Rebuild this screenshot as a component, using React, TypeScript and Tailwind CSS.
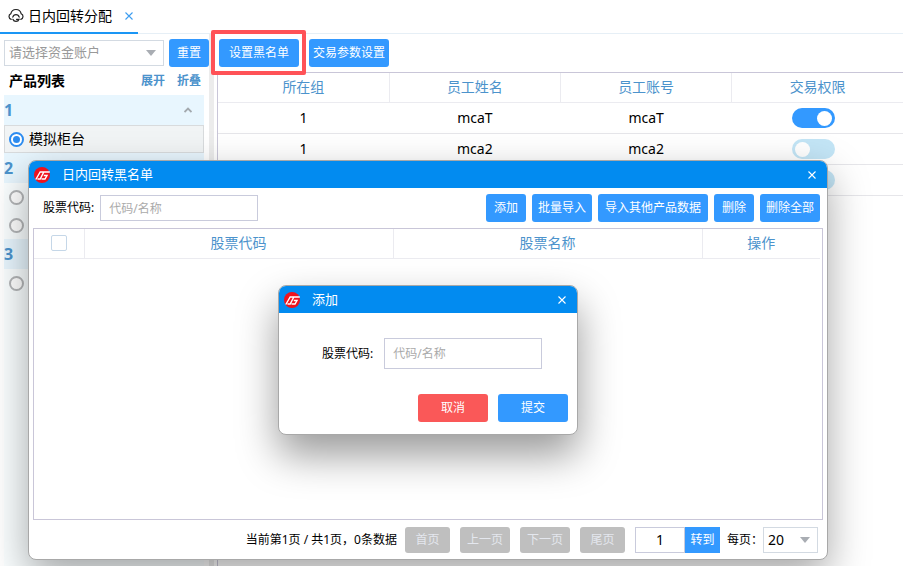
import { useState } from "react";
import type { ReactNode } from "react";

const BUTTON = "h-7 rounded-[3px] bg-[#3399ff] text-xs text-white hover:bg-[#1f8af5]";

function CloudIcon() {
  return (
    <svg className="size-4" viewBox="0 0 16 16" fill="none" stroke="#222" strokeWidth="1.2" strokeLinecap="round">
      <path d="M3.2 11.3A2.900 2.900 0 0 1 2.800 5.800A5.300 5.300 0 0 1 13.200 5.800A2.900 2.900 0 0 1 12.800 11.300" />
      <path d="M4.800 9.200A3.300 3.300 0 0 1 11.200 9.200" />
      <path d="M4.900 11.300A3.300 3.300 0 0 0 11.100 11.300H8.500" />
    </svg>
  );
}

function LogoIcon() {
  return (
    <svg className="size-4" viewBox="0 0 16 16">
      <circle cx="8" cy="8" r="8" fill="#f0121c" />
      <path d="M15.800 5H6.200L1.800 12.500M9.800 5L6.200 12H3.500M9.800 8.500H13L11 12H7.500" fill="none" stroke="#fff" strokeWidth="1.400" />
    </svg>
  );
}

function CloseIcon({ className }: { className?: string }) {
  return (
    <svg className={className} viewBox="0 0 8 8" fill="none" stroke="currentColor" strokeWidth="1.1">
      <path d="M0.500 0.500L7.500 7.500M7.500 0.500L0.500 7.500" />
    </svg>
  );
}

function Caret() {
  return (
    <svg className="pointer-events-none absolute top-1/2 right-2 h-1.5 w-2.5 -translate-y-1/2" viewBox="0 0 10 6">
      <path d="M0 0H10L5 6Z" fill="#a9adb3" />
    </svg>
  );
}

function Switch({ on, label }: { on: boolean; label: string }) {
  return (
    <input
      type="checkbox"
      role="switch"
      aria-label={label}
      defaultChecked={on}
      className="relative block h-5 w-[43px] appearance-none rounded-full bg-[#c3e5f6] before:absolute before:top-[3px] before:left-[3px] before:size-[15px] before:rounded-full before:bg-white checked:bg-[#3399ff] checked:before:left-[25px]"
    />
  );
}

function Radio({ label, checked }: { label: string; checked?: boolean }) {
  return (
    <input
      type="radio"
      name="product"
      aria-label={label}
      defaultChecked={checked}
      className="grid size-[15px] appearance-none place-items-center rounded-full border-2 border-[#b4b6b8] bg-white checked:border-[#2d8cf0] checked:before:size-[7px] checked:before:rounded-full checked:before:bg-[#2d8cf0]"
    />
  );
}

function GroupHeader({ name }: { name: string }) {
  return (
    <div className="flex h-[30px] items-center justify-between bg-[#e8f6fe] pr-3 text-base font-bold text-[#4c93cc]">
      {name}
      <svg className="h-1.5 w-2" viewBox="0 0 8 6" fill="none" stroke="#a3a9ae" strokeWidth="1.800">
        <path d="M0.500 5L4 1.500L7.500 5" />
      </svg>
    </div>
  );
}

function ProductItem({ name, label, checked }: { name?: string; label: string; checked?: boolean }) {
  return (
    <label
      className={
        checked
          ? "flex h-7 items-center gap-[5px] border border-[#d8dbdd] bg-[#f1f4f5] pl-1 text-sm"
          : "flex h-7 items-center gap-[5px] pl-[5px] text-sm"
      }
    >
      <Radio label={label} checked={checked} />
      {name}
    </label>
  );
}

function Sidebar() {
  return (
    <aside className="flex w-[209px] shrink-0 flex-col pt-[5px] pl-1">
      <div className="flex items-center gap-[5px]">
        <div className="relative flex-1">
          <select aria-label="资金账户" className="block h-[26px] w-full appearance-none border border-[#d3dae2] bg-white pl-1 text-[13px] text-[#999]">
            <option>请选择资金账户</option>
          </select>
          <Caret />
        </div>
        <button className={`${BUTTON} w-10`}>重置</button>
      </div>
      <div className="flex h-7 items-center gap-3 pr-2 pl-[5px]">
        <h2 className="flex-1 text-sm font-bold">产品列表</h2>
        <button className="text-xs font-bold text-[#4c93cc]">展开</button>
        <button className="text-xs font-bold text-[#4c93cc]">折叠</button>
      </div>
      <div className="mr-[5px] flex-1 bg-[#fafeff]">
        <GroupHeader name="1" />
        <ProductItem name="模拟柜台" label="模拟柜台" checked />
        <GroupHeader name="2" />
        <ProductItem label="2-1" />
        <ProductItem label="2-2" />
        <GroupHeader name="3" />
        <ProductItem label="3-1" />
      </div>
    </aside>
  );
}

const staff = [
  { group: "1", name: "mcaT", account: "mcaT", on: true },
  { group: "1", name: "mca2", account: "mca2", on: false },
  { group: "", name: "", account: "", on: false },
];

function StaffTable() {
  return (
    <div className="mt-[5px] ml-[3px] flex-1 border-t border-l border-[#c9c6d8]">
      <table className="w-full table-fixed border-collapse text-center text-sm">
        <thead>
          <tr className="h-[29px] border-b border-[#ebebf0] text-[#4c93cc]">
            <th className="border-r border-[#ebebf0] font-normal">所在组</th>
            <th className="border-r border-[#ebebf0] font-normal">员工姓名</th>
            <th className="border-r border-[#ebebf0] font-normal">员工账号</th>
            <th className="font-normal">交易权限</th>
          </tr>
        </thead>
        <tbody>
          {staff.map((row, i) => (
            <tr key={i} className="h-[31px] border-b border-[#e6e6ea]">
              <td>{row.group}</td>
              <td>{row.name}</td>
              <td>{row.account}</td>
              <td>
                <div className="flex justify-center pr-2">
                  <Switch on={row.on} label="交易权限" />
                </div>
              </td>
            </tr>
          ))}
        </tbody>
      </table>
    </div>
  );
}

function Dialog({ title, className, children }: { title: string; className: string; children: ReactNode }) {
  return (
    <section
      role="dialog"
      aria-label={title}
      className={`absolute flex flex-col overflow-hidden rounded-lg border border-[#a8a8a8] bg-white ${className}`}
    >
      <header className="flex h-[27px] shrink-0 items-center bg-[#028bf0] pr-[9px] pl-[5px] text-[13px] text-white">
        <LogoIcon />
        <h2 className="ml-3 flex-1">{title}</h2>
        <button aria-label="关闭" className="p-0.5">
          <CloseIcon className="size-2" />
        </button>
      </header>
      {children}
    </section>
  );
}

function PageButton({ className, children }: { className: string; children: ReactNode }) {
  return (
    <button disabled className={`h-[26px] rounded-[3px] bg-[#bfbfbf] text-xs text-[#e4e7ee] ${className}`}>
      {children}
    </button>
  );
}

function Pagination() {
  const [page, setPage] = useState("1");
  return (
    <footer className="flex h-[39px] items-center justify-end pr-[9px] text-xs">
      <span className="mr-2">当前第1页 / 共1页，0条数据</span>
      <div className="flex gap-2.5">
        <PageButton className="w-[45px]">首页</PageButton>
        <PageButton className="w-[50px]">上一页</PageButton>
        <PageButton className="w-[50px]">下一页</PageButton>
        <PageButton className="w-[45px]">尾页</PageButton>
      </div>
      <input
        aria-label="页码"
        value={page}
        onChange={(e) => setPage(e.target.value)}
        className="ml-2.5 h-[26px] w-[50px] border border-[#c9cbdc] text-center text-sm"
      />
      <button className="h-[26px] w-[35px] bg-[#3399ff] text-xs text-white">转到</button>
      <label htmlFor="page-size" className="ml-[7px] w-9">
        每页：
      </label>
      <div className="relative">
        <select id="page-size" className="block h-[26px] w-[55px] appearance-none border border-[#d3dae2] bg-white pl-1 text-sm">
          <option>20</option>
        </select>
        <Caret />
      </div>
    </footer>
  );
}

function BlacklistDialog() {
  return (
    <Dialog title="日内回转黑名单" className="top-[160px] left-7 h-[400px] w-[800px] shadow-[0_16px_40px_rgba(0,0,0,0.35)]">
      <div className="flex h-10 items-center gap-1.5 pr-[7px] pl-3.5 text-xs">
        <label htmlFor="filter-code">股票代码:</label>
        <input id="filter-code" placeholder="代码/名称" className="h-[26px] w-[158px] border border-[#c9cbdc] px-2 placeholder:text-[#aaa]" />
        <div className="ml-auto flex gap-1.5">
          <button className={`${BUTTON} w-10`}>添加</button>
          <button className={`${BUTTON} w-[60px]`}>批量导入</button>
          <button className={`${BUTTON} w-[110px]`}>导入其他产品数据</button>
          <button className={`${BUTTON} w-10`}>删除</button>
          <button className={`${BUTTON} w-[60px]`}>删除全部</button>
        </div>
      </div>
      <div className="mx-1 flex-1 border border-[#c9c6d8] pr-0.5">
        <table className="w-full table-fixed border-collapse text-center text-sm">
          <thead>
            <tr className="h-[29px] border-b border-[#ebebf0] text-[#4c93cc]">
              <th className="w-[50px] border-r border-[#ebebf0]">
                <input type="checkbox" aria-label="全选" className="mx-auto block size-4 appearance-none rounded-xs border border-[#c5d7e8] checked:bg-[#3399ff]" />
              </th>
              <th className="border-r border-[#ebebf0] font-normal">股票代码</th>
              <th className="border-r border-[#ebebf0] font-normal">股票名称</th>
              <th className="w-[118px] font-normal">操作</th>
            </tr>
          </thead>
        </table>
      </div>
      <Pagination />
    </Dialog>
  );
}

function AddDialog() {
  return (
    <Dialog title="添加" className="top-[285px] left-[278px] h-[150px] w-[300px] shadow-[0_20px_40px_rgba(0,0,0,0.4)]">
      <div className="mt-[25px] flex items-center gap-[11px] pl-[43px] text-xs">
        <label htmlFor="stock-code">股票代码:</label>
        <input id="stock-code" placeholder="代码/名称" className="h-[31px] w-[158px] border border-[#c9cbdc] px-2 placeholder:text-[#aaa]" />
      </div>
      <div className="mt-[25px] flex justify-end gap-2.5 pr-[9px]">
        <button className="h-7 w-[70px] rounded-[3px] bg-[#fa5858] text-xs text-white">取消</button>
        <button className={`${BUTTON} w-[70px]`}>提交</button>
      </div>
    </Dialog>
  );
}

export default function App() {
  return (
    <div className="relative flex h-screen flex-col overflow-hidden bg-white font-['Noto_Sans','Noto_Sans_CJK_SC',sans-serif] text-black">
      <nav className="flex h-[34px] shrink-0 border-b border-[#e6eff6]">
        <div className="flex h-[34px] w-[138px] items-center border-b-2 border-[#1a96f5] pl-2 text-sm">
          <CloudIcon />
          <span className="ml-1">日内回转分配</span>
          <button aria-label="关闭标签" className="ml-[13px] text-[#3d9df0]">
            <CloseIcon className="size-2" />
          </button>
        </div>
      </nav>
      <div className="flex min-h-0 flex-1">
        <Sidebar />
        <div className="w-[5px] shrink-0 bg-[#ececec]" />
        <main className="flex min-w-0 flex-1 flex-col pt-[5px]">
          <div className="flex gap-2.5 pl-[5px]">
            <div className="relative">
              <button className={`${BUTTON} w-20`}>设置黑名单</button>
              <div className="pointer-events-none absolute -top-[9px] -right-[7px] -bottom-2 -left-2 rounded-xs border-4 border-[#ff5257]" />
            </div>
            <button className={`${BUTTON} w-20`}>交易参数设置</button>
          </div>
          <StaffTable />
        </main>
      </div>
      <BlacklistDialog />
      <AddDialog />
    </div>
  );
}
